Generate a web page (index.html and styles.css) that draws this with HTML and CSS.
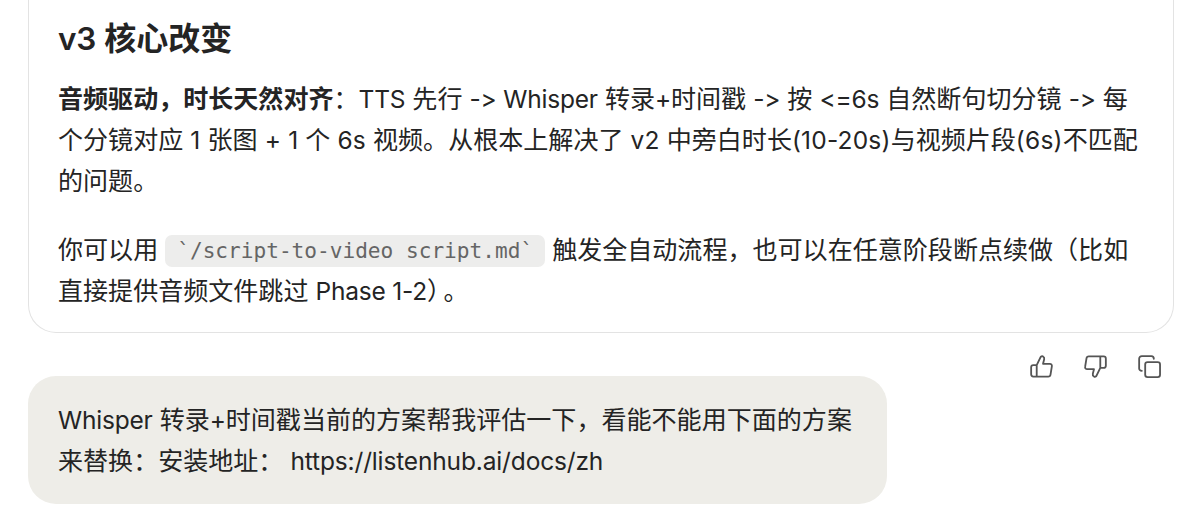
FILE: index.html
```html
<!DOCTYPE html>
<html lang="zh-CN">
<head>
<meta charset="utf-8">
<title>Chat</title>
<link rel="stylesheet" href="styles.css">
</head>
<body>
<main class="chat">
  <article class="card">
    <h2 class="title"><span class="lat">v3</span> 核心改变</h2>
    <p class="text"><span class="line"><strong>音频驱动，时长天然对齐</strong>：<span class="lat">TTS</span> 先行 <span class="lat">-&gt; Whisper</span> 转录<span class="lat">+</span>时间戳 <span class="lat">-&gt;</span> 按 <span class="lat">&lt;=6s</span> 自然断句切分镜 <span class="lat">-&gt;</span> 每</span>
      <span class="line numeric">个分镜对应 <span class="lat">1</span> 张图 <span class="lat">+ 1</span> 个 <span class="lat">6s</span> 视频。从根本上解决了 <span class="lat">v2</span> 中旁白时长<span class="lat">(10-20s)</span>与视频片段<span class="lat">(6s)</span>不匹配</span>
      <span class="line">的问题。</span></p>
    <p class="text"><span class="line">你可以用 <code class="code">`/script-to-video script.md`</code> 触发全自动流程，也可以在任意阶段断点续做（比如</span>
      <span class="line">直接提供音频文件跳过 <span class="lat">Phase 1-2</span><span class="paren">）</span>。</span></p>
  </article>
  <div class="actions">
    <svg class="icon" viewBox="0 0 24 24"><path d="M7 10.500V22.500M3.500 10.500H7L10.900 2.400C11.400 1.300 12.500 1 13.500 1.500C14.600 2.100 15.100 3.200 14.800 4.400L13.600 9.200H20.700C22.200 9.200 23.100 10.300 22.800 11.800L21.400 20.400C21.200 21.700 20.300 22.500 19 22.500H3.500C2.100 22.500 1.200 21.600 1.200 20.200V12.800C1.200 11.400 2.100 10.500 3.500 10.500Z"/></svg>
    <svg class="icon" viewBox="0 0 24 24"><path d="M17 13.500V1.500M20.500 13.500H17L13.100 21.600C12.600 22.700 11.500 23 10.500 22.500C9.400 21.900 8.900 20.800 9.200 19.600L10.400 14.800H3.300C1.800 14.800 .9 13.700 1.200 12.200L2.600 3.600C2.800 2.300 3.700 1.500 5 1.500H20.500C21.900 1.500 22.800 2.400 22.800 3.800V11.200C22.800 12.600 21.900 13.500 20.500 13.500Z"/></svg>
    <svg class="icon" viewBox="0 0 24 24"><rect x="7.500" y="7.500" width="15.500" height="15.500" rx="2.500"/><path d="M4 16.500C2.300 16.500 1.200 15.500 1.200 14V4C1.200 2.300 2.300 1.200 4 1.200H14C15.500 1.200 16.500 2.300 16.500 4"/></svg>
  </div>
  <div class="bubble"><span class="line"><span class="lat">Whisper</span> 转录<span class="lat">+</span>时间戳当前的方案帮我评估一下，看能不能用下面的方案</span>
    <span class="line">来替换：安装地址： <span class="lat url">https://listenhub.ai/docs/zh</span></span></div>
</main>
</body>
</html>
```
FILE: styles.css
```css
body { margin: 0; background: #fff; color: #242424; font-family: Inter, "Noto Sans CJK SC", sans-serif; }
.chat { height: 518px; box-sizing: border-box; padding: 0 26px 0 28px; overflow: hidden; }
.card { box-sizing: border-box; width: 1146px; height: 333px; padding: 15px 0 0 29px; border: 1.500px solid #e3e3e3; border-top: 0; border-radius: 0 0 28px 28px; }
.title { margin: 0 0 16px; font-size: 32px; line-height: 48px; font-weight: 600; }
.text { margin: 0 0 28px; }
.text, .bubble { font-size: 25.050px; line-height: 41px; }
.line { display: block; height: 41px; white-space: nowrap; }
.lat { font-size: 24.500px; letter-spacing: -0.200px; }
.numeric .lat { letter-spacing: 0.200px; }
.lat.url { letter-spacing: -0.150px; }
.title .lat { font-size: 31.500px; }
.paren { margin-right: 4px; }
.code { display: inline-block; height: 32px; line-height: 32px; padding: 0 12px; border-radius: 7px; background: #ededec; color: #656565; font-family: "DejaVu Sans Mono", monospace; font-size: 21.120px; vertical-align: 1px; }
.actions { display: flex; justify-content: flex-end; gap: 31px; height: 43px; padding: 21px 13px 0 0; box-sizing: border-box; }
.icon { width: 23px; height: 23px; margin-top: 1px; fill: none; stroke: #555; stroke-width: 1.900; stroke-linecap: round; stroke-linejoin: round; overflow: visible; }
.bubble { box-sizing: border-box; width: 859px; height: 128px; padding: 24px 30px 0; border-radius: 28px; background: #eeede8; }
```
